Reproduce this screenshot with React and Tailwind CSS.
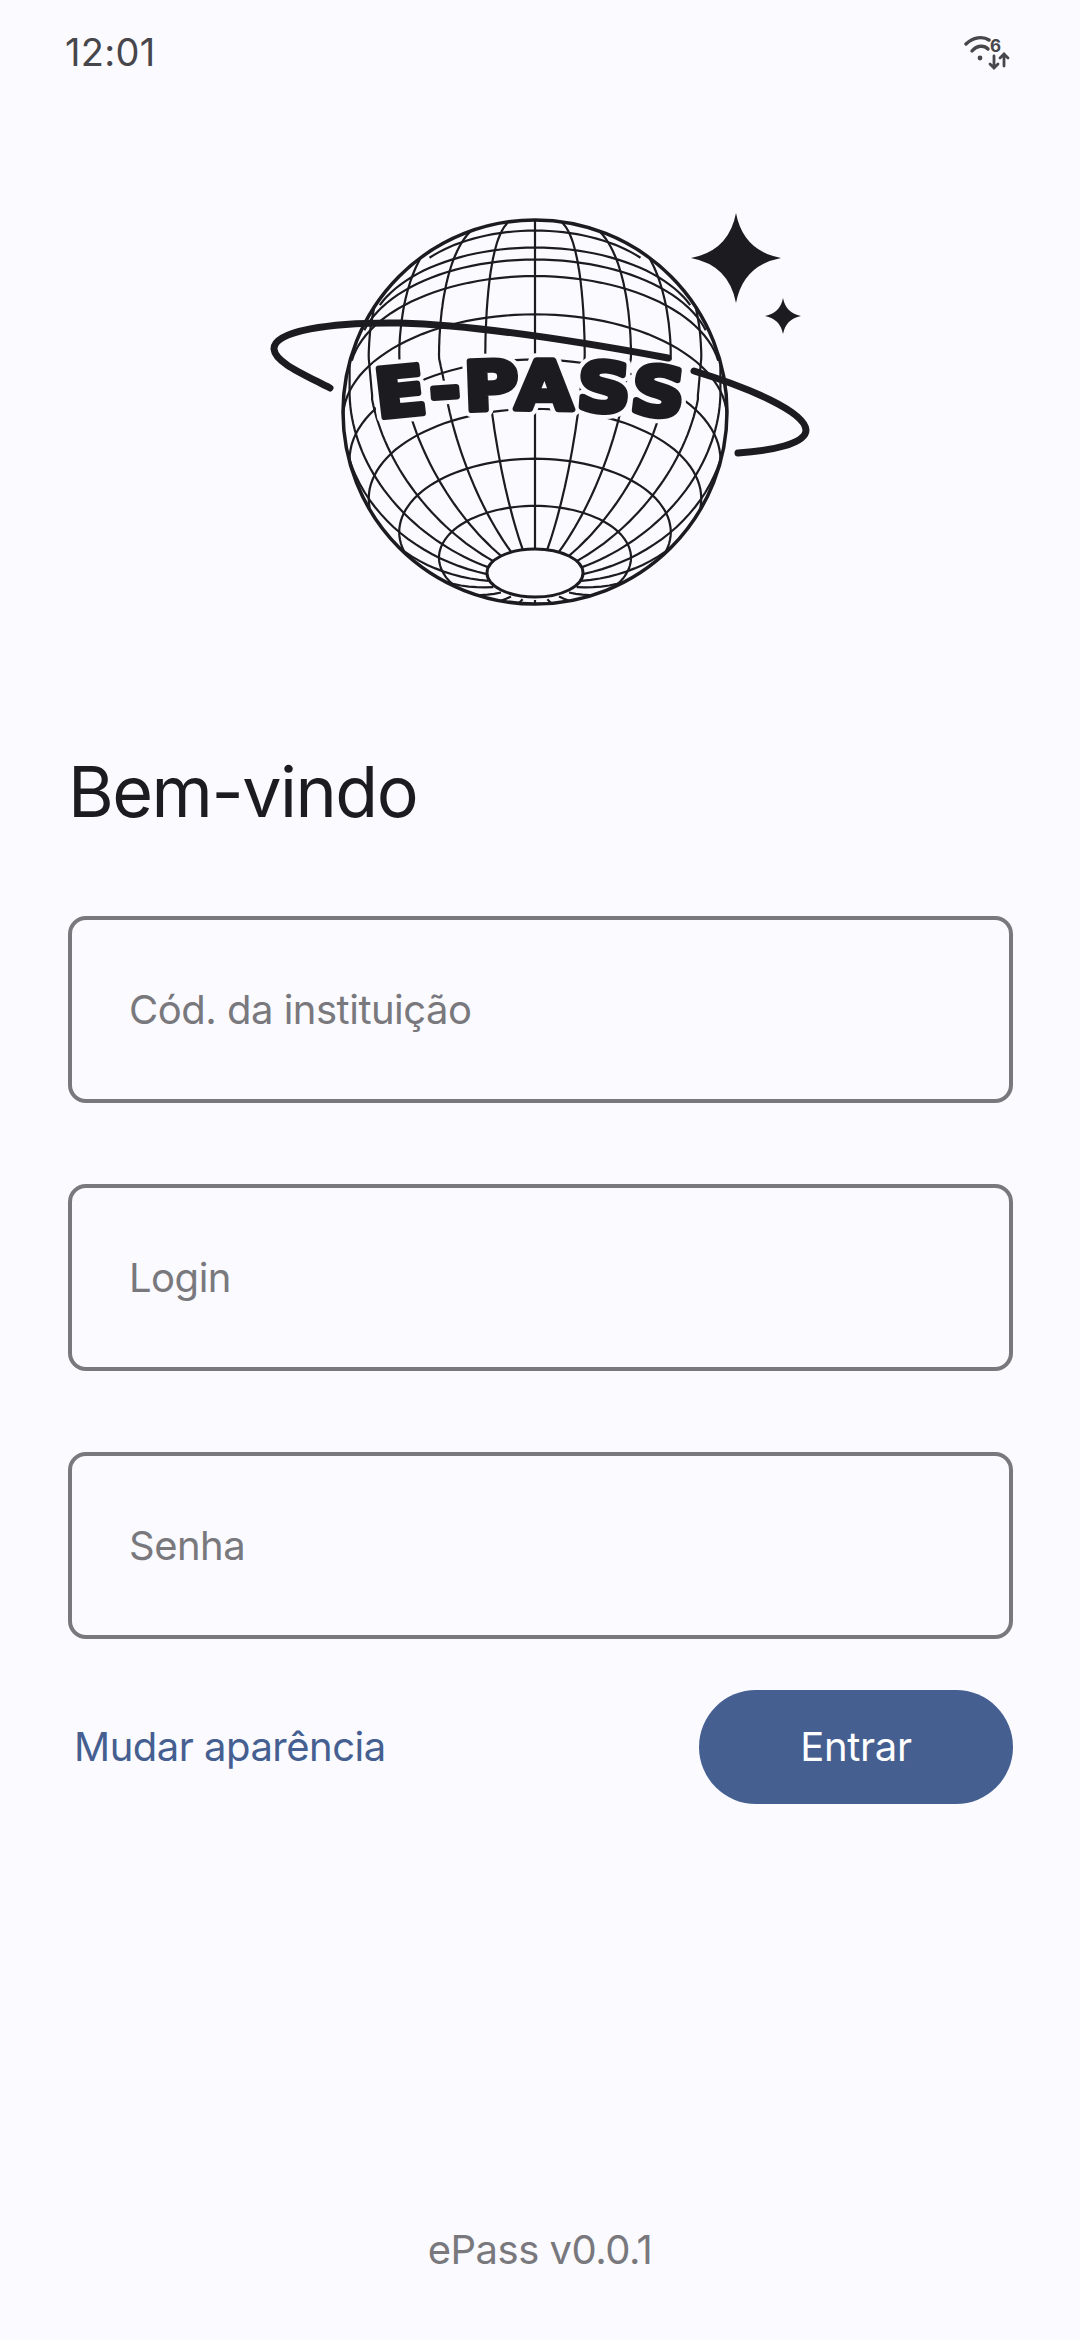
const R = 192
const CX = 535
const CY = 412
const COS = 0.84
const SIN = 0.54
const RAD = Math.PI / 180

// point on the tilted sphere, a = angle from the south pole, t = longitude
function project(a, t) {
  const sa = Math.sin(a * RAD)
  const ca = Math.cos(a * RAD)
  const st = Math.sin(t * RAD)
  const ct = Math.cos(t * RAD)
  return {
    x: CX + R * sa * ct,
    y: CY + 6 + R * (ca * COS + sa * st * SIN),
    z: ca * SIN - sa * st * COS,
  }
}

function toPath(points) {
  let d = ''
  let open = false
  for (const p of points) {
    if (p.z < -0.03) {
      open = false
      continue
    }
    d += `${open ? 'L' : 'M'}${p.x.toFixed(1)} ${p.y.toFixed(1)}`
    open = true
  }
  return d
}

const rings = [30, 45, 60, 75, 90, 105, 113, 120, 135].map((a) => {
  const pts = []
  for (let t = -180; t <= 180; t += 3) pts.push(project(a, t))
  return toPath(pts)
})

// the logo's upper half is not a true projection: lines stay near vertical, then bend at the top
function frontMeridian(k) {
  const pts = []
  const t = -90 + k * 15
  for (let a = 14.5; a <= 180; a += 2) {
    const p = project(a, t)
    if (p.y < 395) break
    pts.push(p)
  }
  const x0 = pts[pts.length - 1].x - CX
  const top = R * Math.sin(k * 15 * RAD)
  for (let y = 395; y >= 216; y -= 4) {
    let x
    if (y > 358) {
      x = x0 + (top - x0) * ((395 - y) / 37)
    } else {
      const u = (358 - y) / 142
      x = top * Math.pow(1 - u * u, 0.25)
    }
    pts.push({ x: CX + x, y, z: 1 })
  }
  return toPath(pts)
}

const meridians = Array.from({ length: 24 }, (_, i) => {
  const k = i > 12 ? i - 24 : i
  if (Math.abs(k) <= 5) return frontMeridian(k)
  const pts = []
  for (let a = 14.5; a <= 180; a += 3) pts.push(project(a, -90 + k * 15))
  return toPath(pts)
})

function Sparkle({ x, y, r }) {
  const k = r * 0.16
  return (
    <path
      fill="#1c1b20"
      d={`M${x} ${y - r}Q${x + k} ${y - k} ${x + r} ${y}Q${x + k} ${y + k} ${x} ${y + r}Q${x - k} ${y + k} ${x - r} ${y}Q${x - k} ${y - k} ${x} ${y - r}Z`}
    />
  )
}

function Logo() {
  const label = (props) => (
    <text
      fontFamily="'DejaVu Sans', sans-serif"
      fontWeight="700"
      fontSize="67"
      letterSpacing="3"
      strokeLinejoin="round"
      transform="translate(378 0) scale(1.1 1) translate(-378 0)"
      {...props}
    >
      <textPath href="#epass-arc">E-PASS</textPath>
    </text>
  )

  return (
    <svg width="580" height="430" viewBox="250 190 580 430" fill="none">
      <defs>
        <clipPath id="globe-clip">
          <circle cx={CX} cy={CY} r={R} />
        </clipPath>
        <path id="epass-arc" d="M378 418Q516 400 654 418L682 422" />
      </defs>
      <g clipPath="url(#globe-clip)" stroke="#1c1b20" strokeWidth="2.2">
        {rings.map((d, i) => <path key={i} d={d} />)}
        {meridians.map((d, i) => <path key={i} d={d} />)}
      </g>
      <circle cx={CX} cy={CY} r={R} stroke="#1c1b20" strokeWidth="3.5" />
      <ellipse cx={CX} cy="573" rx="48" ry="24" fill="#fafaff" stroke="#1c1b20" strokeWidth="3" />
      {label({ fill: '#fafaff', stroke: '#fafaff', strokeWidth: 14 })}
      {label({ fill: '#1c1b20', stroke: '#1c1b20', strokeWidth: 6 })}
      <path
        stroke="#1c1b20"
        strokeWidth="7"
        strokeLinecap="round"
        d="M330 388C301 373 275 362 274 349C273 331 330 322 400 323C470 325 560 338 668 358"
      />
      <path
        stroke="#1c1b20"
        strokeWidth="7"
        strokeLinecap="round"
        d="M694 371C750 388 805 412 806 430C806 444 770 451 738 453"
      />
      <Sparkle x={736} y={258} r={45} />
      <Sparkle x={783} y={316} r={18} />
    </svg>
  )
}

function WifiIcon() {
  return (
    <svg width="46" height="36" viewBox="0 0 46 36" fill="none" stroke="#47464b" strokeLinecap="round">
      <path d="M2 10C9 3 19 2 25 6" strokeWidth="3.4" />
      <path d="M8 17C13 11 20 11 24 15" strokeWidth="3.4" />
      <circle cx="16" cy="24" r="2.4" fill="#47464b" stroke="none" />
      <text x="26" y="18" fontSize="17" fontWeight="700" fontFamily="Inter, sans-serif" fill="#47464b" stroke="none">6</text>
      <path d="M30 22V34M26 30L30 34L34 30" strokeWidth="2.8" />
      <path d="M40 32V20M36 24L40 20L44 24" strokeWidth="2.8" />
    </svg>
  )
}

function Field({ label }) {
  return (
    <input
      placeholder={label}
      className="block w-full h-[187px] rounded-[18px] border-4 border-[#79787d] bg-transparent pl-[57px] text-[40px] tracking-[-0.5px] text-[#1c1b20] placeholder:text-[#79787d] outline-none"
    />
  )
}

export default function App() {
  return (
    <div className="flex flex-col h-[2340px] bg-[#fafaff] font-['Inter','Noto_Sans',sans-serif]">
      {/* Status bar */}
      <div className="flex items-center justify-between h-[104px] pl-[65px] pr-[70px]">
        <span className="text-[38px] text-[#47464b] tracking-[0.3px]">12:01</span>
        <WifiIcon />
      </div>

      <div className="pt-[86px] pl-[250px]">
        <Logo />
      </div>

      <div className="pl-[68px] pr-[67px]">
        <h1 className="mt-[128px] text-[70px] leading-[88px] tracking-[-1.5px] text-[#1c1b20]">Bem-vindo</h1>
        <div className="mt-[80px] flex flex-col gap-[81px]">
          <Field label="Cód. da instituição" />
          <Field label="Login" />
          <Field label="Senha" />
        </div>
        <div className="mt-[51px] flex items-center justify-between">
          <button className="pl-[6px] text-[40px] tracking-[-0.5px] text-[#455f91]">Mudar aparência</button>
          <button className="w-[314px] h-[114px] rounded-full bg-[#455f91] text-[40px] tracking-[-0.3px] text-white">Entrar</button>
        </div>
      </div>

      <p className="mt-auto pb-[64px] text-center text-[40px] leading-[52px] tracking-[-0.5px] text-[#79787d]">ePass v0.0.1</p>
    </div>
  )
}
